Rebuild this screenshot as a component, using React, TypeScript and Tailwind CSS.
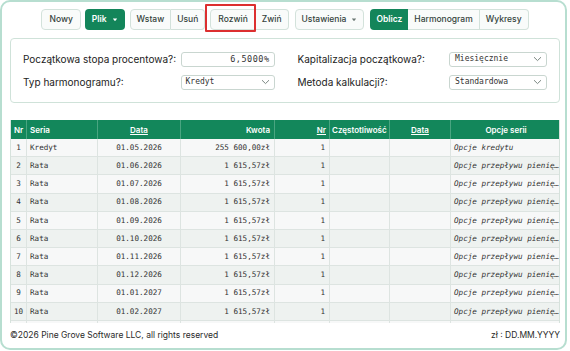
import React from "react";

const SANS = "font-['Inter','Noto_Sans',sans-serif]";
const MONO = "font-['DejaVu_Sans_Mono','Liberation_Mono',monospace]";

function Chevron() {
  return (
    <svg width="9" height="6" viewBox="0 0 9 6" className="shrink-0">
      <path d="M1 1.2 L4.5 4.6 L8 1.2" fill="none" stroke="#7b8782" strokeWidth="1" />
    </svg>
  );
}

function Caret({ color }: { color: string }) {
  return (
    <svg width="6" height="4" viewBox="0 0 6 4" className="ml-[5px]">
      <path d="M0.8 0.5 L5.2 0.5 L3 3.3 Z" fill={color} />
    </svg>
  );
}

const rows = [
  ["1", "Kredyt", "01.05.2026", "255 600,00zł", "1", "Opcje kredytu"],
  ["2", "Rata", "01.06.2026", "1 615,57zł", "1", "Opcje przepływu pienię…"],
  ["3", "Rata", "01.07.2026", "1 615,57zł", "1", "Opcje przepływu pienię…"],
  ["4", "Rata", "01.08.2026", "1 615,57zł", "1", "Opcje przepływu pienię…"],
  ["5", "Rata", "01.09.2026", "1 615,57zł", "1", "Opcje przepływu pienię…"],
  ["6", "Rata", "01.10.2026", "1 615,57zł", "1", "Opcje przepływu pienię…"],
  ["7", "Rata", "01.11.2026", "1 615,57zł", "1", "Opcje przepływu pienię…"],
  ["8", "Rata", "01.12.2026", "1 615,57zł", "1", "Opcje przepływu pienię…"],
  ["9", "Rata", "01.01.2027", "1 615,57zł", "1", "Opcje przepływu pienię…"],
  ["10", "Rata", "01.02.2027", "1 615,57zł", "1", "Opcje przepływu pienię…"],
  ["", "", "", "", "", ""],
];

const COLS = "grid-cols-[16px_71px_83px_94px_55px_60px_61px_110px]";

export default function App() {
  const btn =
    "h-[21px] flex items-center px-[6px] text-[8.5px] font-medium text-[#34433c] bg-[#f9fbfa] border border-[#d3e2db]";
  return (
    <div className={`w-[570px] h-[351px] bg-white ${SANS}`}>
      <div className="w-[567px] h-[350px] border-2 border-[#b7ded0] rounded-[10px] pl-[8px] pr-[5px] flex flex-col overflow-hidden">
        {/* toolbar */}
        <div className="pt-[7px] flex justify-center items-center">
          <div className={`${btn} rounded-[4px] px-[7px]`}>Nowy</div>
          <div className="ml-[4px] h-[21px] flex items-center px-[7px] text-[8.5px] font-semibold text-white bg-[#13855a] rounded-[4px]">
            Plik
            <Caret color="#ffffff" />
          </div>
          <div className="ml-[5px] flex">
            <div className={`${btn} rounded-l-[4px]`}>Wstaw</div>
            <div className={`${btn} rounded-r-[4px] border-l-0`}>Usuń</div>
          </div>
          <div className="ml-[5px] flex relative">
            <div className={`${btn} rounded-l-[4px] px-[7px]`}>Rozwiń</div>
            <div className={`${btn} rounded-r-[4px] border-l-0 px-[4px]`}>Zwiń</div>
            <div className="absolute left-[-5px] top-[-5px] w-[51px] h-[28px] border-2 border-[#dc2f2f] rounded-[1px]" />
          </div>
          <div className={`${btn} ml-[6px] rounded-[4px]`}>
            Ustawienia
            <Caret color="#6a7772" />
          </div>
          <div className="ml-[6px] flex">
            <div className="h-[21px] flex items-center px-[6px] text-[8.5px] font-semibold text-white bg-[#13855a] rounded-l-[4px]">
              Oblicz
            </div>
            <div className={`${btn} border-l-0`}>Harmonogram</div>
            <div className={`${btn} border-l-0 rounded-r-[4px]`}>Wykresy</div>
          </div>
        </div>

        {/* settings panel */}
        <div className="mt-[8px] h-[65px] border border-[#cfe2d9] rounded-[4px] px-[12px] pt-[13px] grid grid-cols-2 gap-x-[21px] gap-y-[9px] content-start text-[10px] text-[#222]">
          <div className="flex items-center justify-between h-[14px]">
            <span>Początkowa stopa procentowa?:</span>
            <div className={`w-[94px] h-[15px] border border-[#c9d6d0] rounded-[3px] bg-white flex items-center justify-end pr-[4px] text-[8.5px] tracking-[0.5px] text-[#333] ${MONO}`}>
              6,5000%
            </div>
          </div>
          <div className="flex items-center justify-between h-[14px] pl-[2px]">
            <span>Kapitalizacja początkowa?:</span>
            <div className={`w-[98px] h-[15px] border border-[#c9d6d0] rounded-[3px] bg-white flex items-center justify-between pl-[5px] pr-[4px] text-[8px] text-[#333] ${MONO}`}>
              <span>Miesięcznie</span>
              <Chevron />
            </div>
          </div>
          <div className="flex items-center justify-between h-[14px]">
            <span>Typ harmonogramu?:</span>
            <div className={`w-[94px] h-[15px] border border-[#c9d6d0] rounded-[3px] bg-white flex items-center justify-between pl-[4px] pr-[4px] text-[8px] text-[#333] ${MONO}`}>
              <span>Kredyt</span>
              <Chevron />
            </div>
          </div>
          <div className="flex items-center justify-between h-[14px] pl-[2px]">
            <span>Metoda kalkulacji?:</span>
            <div className={`w-[98px] h-[15px] border border-[#c9d6d0] rounded-[3px] bg-white flex items-center justify-between pl-[5px] pr-[4px] text-[8px] text-[#333] ${MONO}`}>
              <span>Standardowa</span>
              <Chevron />
            </div>
          </div>
        </div>

        {/* table */}
        <div className="mt-[17px] h-[203px] shrink-0 overflow-hidden border-x border-[#d6e2dc]">
          <div className={`grid ${COLS} h-[19px] bg-[#13875b] text-white text-[8px] font-semibold`}>
            <div className="flex items-center pl-[3px] border-r border-[#4aa581]">Nr</div>
            <div className="flex items-center pl-[3px] border-r border-[#4aa581]">Seria</div>
            <div className="flex items-center justify-center underline border-r border-[#4aa581]">Data</div>
            <div className="flex items-center justify-end pr-[4px] border-r border-[#4aa581]">Kwota</div>
            <div className="flex items-center justify-end pr-[3px] underline border-r border-[#4aa581]">Nr</div>
            <div className="flex items-center pl-[2px] border-r border-[#4aa581]">Częstotliwość</div>
            <div className="flex items-center justify-center underline border-r border-[#4aa581]">Data</div>
            <div className="flex items-center justify-center">Opcje serii</div>
          </div>
          {rows.map((r, i) => (
            <div
              key={i}
              className={`grid ${COLS} h-[18.2px] border-b border-[#dde4e1] text-[7.6px] text-[#333] ${MONO} ${
                i % 2 === 0 ? "bg-[#f7f8f8]" : "bg-[#eef2f0]"
              }`}
            >
              <div className="flex items-center justify-center border-r border-[#dde4e1]">{r[0]}</div>
              <div className="flex items-center pl-[3px] border-r border-[#dde4e1]">{r[1]}</div>
              <div className="flex items-center justify-center border-r border-[#dde4e1]">{r[2]}</div>
              <div className="flex items-center justify-end pr-[4px] border-r border-[#dde4e1]">{r[3]}</div>
              <div className="flex items-center justify-end pr-[4px] border-r border-[#dde4e1]">{r[4]}</div>
              <div className="border-r border-[#dde4e1]" />
              <div className="border-r border-[#dde4e1]" />
              <div className="flex items-center pl-[3px] italic overflow-hidden whitespace-nowrap">{r[5]}</div>
            </div>
          ))}
        </div>

        {/* footer */}
        <div className="flex-1 flex items-center justify-between text-[8.5px] text-[#2a2a2a] pb-[1px]">
          <span>©2026 Pine Grove Software LLC, all rights reserved</span>
          <span>zł : DD.MM.YYYY</span>
        </div>
      </div>
    </div>
  );
}
